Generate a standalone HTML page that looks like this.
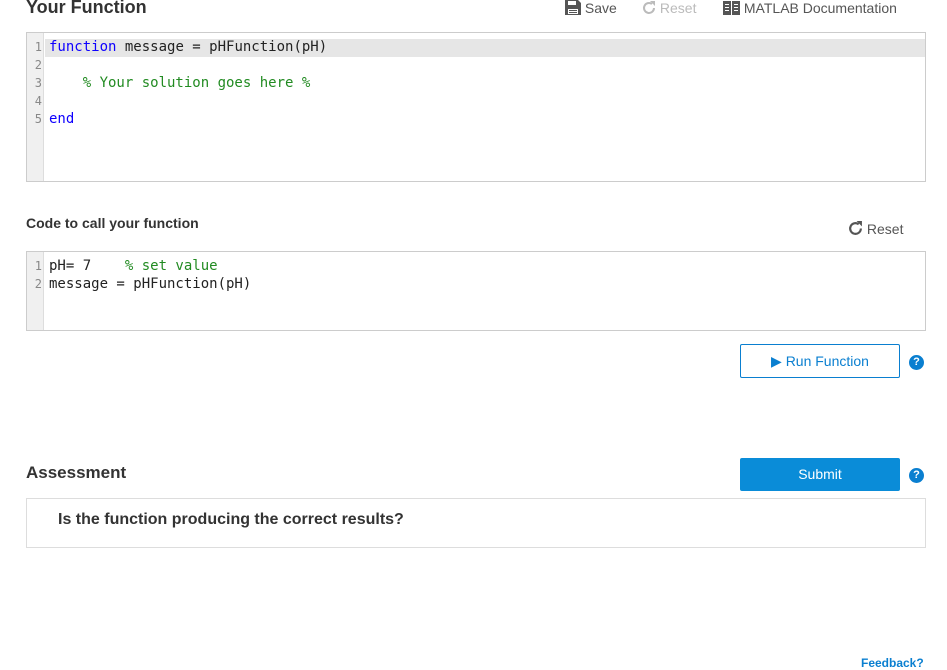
<!DOCTYPE html>
<html><head><meta charset="utf-8"><style>
*{margin:0;padding:0;box-sizing:border-box}
body{width:947px;height:665px;background:#fff;font-family:"Liberation Sans",sans-serif;position:relative;overflow:hidden;color:#333}
.a{position:absolute}
.h{font-weight:bold;color:#333}
.ed{position:absolute;left:26px;width:900px;border:1px solid #ccc;background:#fff}
.gut{position:absolute;left:0;top:0;bottom:0;width:17px;background:#f0f0f0;border-right:1px solid #ddd}
.ln{position:absolute;left:0;width:15px;text-align:right;font:12px "DejaVu Sans Mono",monospace;color:#888}
.cd{position:absolute;left:22px;font:14px "DejaVu Sans Mono",monospace;color:#222;white-space:pre;line-height:18px}
.k{color:#0e00ff}.c{color:#228b22}
.help{position:absolute;width:15px;height:15px;border-radius:50%;background:#0a7fd0;color:#fff;font:bold 11px "Liberation Sans",sans-serif;text-align:center;line-height:15px}
</style></head><body>
<div class="a h" style="left:26px;top:-3px;font-size:18px">Your Function</div>
<div class="a" style="left:565px;top:0;font-size:14px;color:#555"><svg width="16" height="15" viewBox="0 0 16 15" style="vertical-align:-2px"><path d="M0 0h13l3 3v12H0z" fill="#555"/><rect x="3" y="1" width="8" height="4" fill="#fff"/><rect x="3" y="9" width="10" height="5" fill="#fff"/><rect x="4" y="10" width="8" height="1" fill="#555"/><rect x="4" y="12" width="8" height="1" fill="#555"/></svg> Save</div>
<div class="a" style="left:642px;top:0;font-size:14px;color:#bbb"><svg width="14" height="14" viewBox="0 0 14 14" style="vertical-align:-2px"><path d="M12 7a5 5 0 1 1-2-4" fill="none" stroke="#bbb" stroke-width="2"/><path d="M8 0h5v5z" fill="#bbb"/></svg> Reset</div>
<div class="a" style="left:723px;top:0;font-size:14px;color:#555"><svg width="17" height="14" viewBox="0 0 17 14" style="vertical-align:-2px"><rect x="0" y="0" width="17" height="14" fill="#555"/><rect x="8" y="0" width="1" height="14" fill="#fff"/><g fill="#fff"><rect x="2" y="3" width="4" height="1"/><rect x="2" y="6" width="4" height="1"/><rect x="2" y="9" width="4" height="1"/><rect x="11" y="3" width="4" height="1"/><rect x="11" y="6" width="4" height="1"/><rect x="11" y="9" width="4" height="1"/></g></svg> MATLAB Documentation</div>

<div class="ed" style="top:32px;height:150px">
<div style="position:absolute;left:18px;right:0;top:6px;height:18px;background:#e6e6e6"></div>
<div class="gut"></div>
<div class="ln" style="top:7px">1</div><div class="ln" style="top:25px">2</div><div class="ln" style="top:43px">3</div><div class="ln" style="top:61px">4</div><div class="ln" style="top:79px">5</div>
<div class="cd" style="top:5px"><span class="k">function</span> message = pHFunction(pH)

    <span class="c">% Your solution goes here %</span>

<span class="k">end</span></div>
</div>

<div class="a h" style="left:26px;top:215px;font-size:14px">Code to call your function</div>
<div class="a" style="left:848px;top:221px;font-size:14px;color:#555"><svg width="15" height="15" viewBox="0 0 14 14" style="vertical-align:-2px"><path d="M12 7a5 5 0 1 1-2-4" fill="none" stroke="#555" stroke-width="2"/><path d="M8 0h5v5z" fill="#555"/></svg> Reset</div>
<div class="ed" style="top:251px;height:80px">
<div class="gut"></div>
<div class="ln" style="top:7px">1</div><div class="ln" style="top:25px">2</div>
<div class="cd" style="top:5px">pH= 7    <span class="c">% set value</span>
message = pHFunction(pH)</div>
</div>

<div class="a" style="left:740px;top:344px;width:160px;height:34px;border:1px solid #0a7fd0;border-radius:2px;color:#0a7fd0;font-size:14px;text-align:center;line-height:32px">&#9654; Run Function</div>
<div class="help" style="left:909px;top:355px">?</div>

<div class="a h" style="left:26px;top:463px;font-size:17px">Assessment</div>
<div class="a" style="left:740px;top:458px;width:160px;height:33px;background:#0a8cd8;border-radius:2px;color:#fff;font-size:14px;text-align:center;line-height:33px">Submit</div>
<div class="help" style="left:909px;top:468px">?</div>
<div class="a" style="left:26px;top:498px;width:900px;height:50px;border:1px solid #ddd"></div>
<div class="a h" style="left:58px;top:511px;font-size:16px">Is the function producing the correct results?</div>
<div class="a" style="left:861px;top:656px;font-size:12px;font-weight:bold;color:#0a7fd0">Feedback?</div>
</body></html>
